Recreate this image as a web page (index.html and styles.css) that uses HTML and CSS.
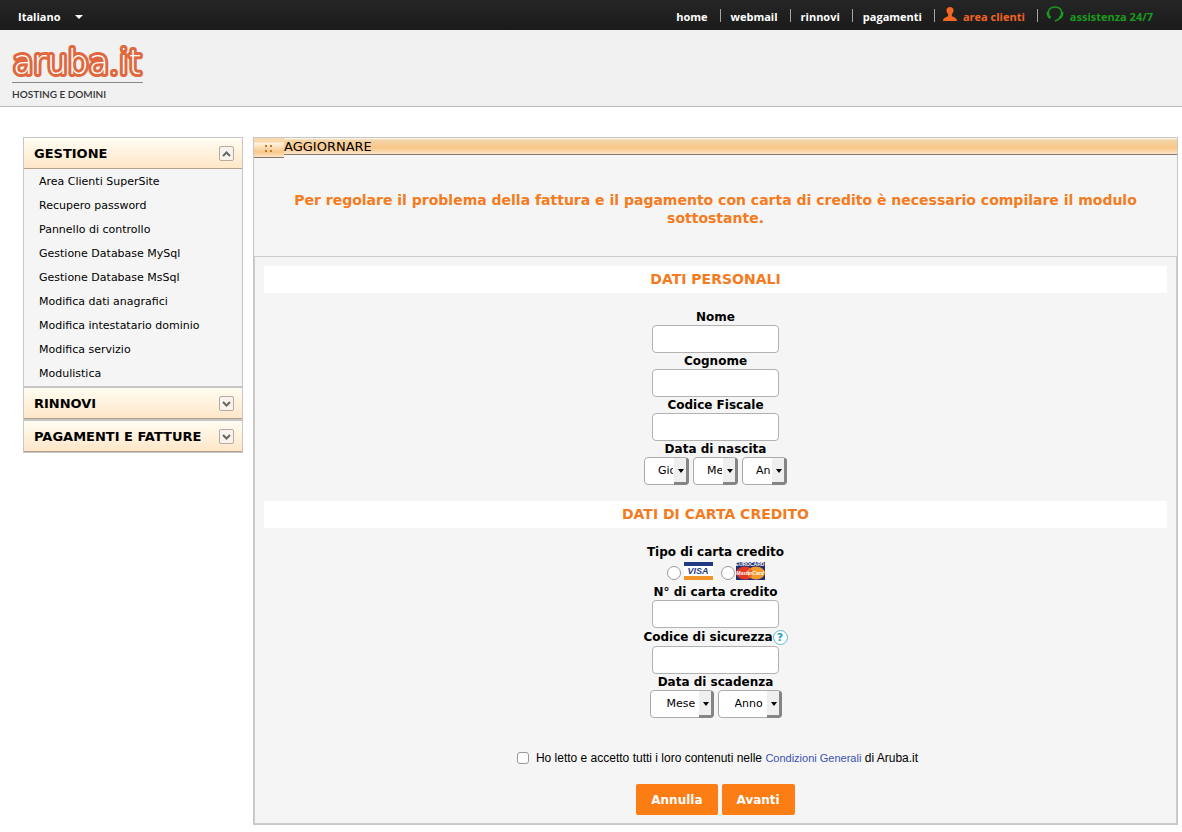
FILE: index.html
```html
<!DOCTYPE html>
<html lang="it">
<head>
<meta charset="utf-8">
<title>Aruba.it - Hosting e domini</title>
<link rel="stylesheet" href="styles.css">
</head>
<body>
<div class="topbar">
  <button class="language" type="button">Italiano <span class="caret"></span></button>
  <nav class="topnav">
    <a href="#">home</a>
    <a href="#">webmail</a>
    <a href="#">rinnovi</a>
    <a href="#">pagamenti</a>
    <a href="#" class="clients"><svg width="14" height="14" viewBox="0 0 14 14"><path fill="#f26522" d="M7 0C4.600 0 3.400 1.500 3.500 3.400C3.600 5.200 4.300 6.300 5.200 7.200L5 9C4 10.300 0 10.300 0 14H14C14 10.300 10 10.300 9 9L8.800 7.200C9.700 6.300 10.400 5.200 10.500 3.400C10.600 1.500 9.400 0 7 0Z"/></svg>area clienti</a>
    <a href="#" class="support"><svg width="18" height="16" viewBox="0 0 18 16"><path fill="none" stroke="#1a9a1e" stroke-width="1.500" d="M2.500 8C1.500 4 4.500 1 9 1S16.500 4 15.500 8M14.500 11C13 13.500 11.500 14.500 9 15"/><path fill="none" stroke="#1a9a1e" stroke-width="2.500" d="M1.800 6C1.500 9 2.500 10.500 4.500 12M16.200 6C16.500 9 15.500 10.500 13.800 12"/></svg>assistenza 24/7</a>
  </nav>
</div>
<header class="header">
  <a href="#" class="brand">
    <svg class="logo" width="131" height="42" viewBox="0 0 131 42" role="img" aria-label="aruba.it"><text class="logo-text" x="1" y="34">aruba.it</text></svg>
    <span class="tagline">HOSTING E DOMINI</span>
  </a>
</header>
<div class="page">
  <aside class="sidebar">
    <button class="section-head" type="button">GESTIONE <span class="toggle"><svg width="9" height="6" viewBox="0 0 9 6"><path d="M1 5L4.500 1.500L8 5"/></svg></span></button>
    <ul class="menu">
      <li><a href="#">Area Clienti SuperSite</a></li>
      <li><a href="#">Recupero password</a></li>
      <li><a href="#">Pannello di controllo</a></li>
      <li><a href="#">Gestione Database MySql</a></li>
      <li><a href="#">Gestione Database MsSql</a></li>
      <li><a href="#">Modifica dati anagrafici</a></li>
      <li><a href="#">Modifica intestatario dominio</a></li>
      <li><a href="#">Modifica servizio</a></li>
      <li><a href="#">Modulistica</a></li>
    </ul>
    <button class="section-head closed" type="button">RINNOVI <span class="toggle"><svg width="9" height="6" viewBox="0 0 9 6"><path d="M1 1L4.500 4.500L8 1"/></svg></span></button>
    <button class="section-head closed" type="button">PAGAMENTI E FATTURE <span class="toggle"><svg width="9" height="6" viewBox="0 0 9 6"><path d="M1 1L4.500 4.500L8 1"/></svg></span></button>
  </aside>
  <main class="panel">
    <div class="titlebar">
      <span class="grip"><svg width="8" height="8" viewBox="0 0 8 8"><path fill="#c07a28" d="M0 0h2v2H0zM5 0h2v2H5zM0 5h2v2H0zM5 5h2v2H5z"/></svg></span>
      <h1 class="title">AGGIORNARE</h1>
    </div>
    <p class="intro">Per regolare il problema della fattura e il pagamento con carta di credito è necessario compilare il modulo sottostante.</p>
    <form class="form">
      <h2 class="band">DATI PERSONALI</h2>
      <div class="fields">
        <label class="label" for="nome">Nome</label>
        <input class="text" id="nome" type="text">
        <label class="label" for="cognome">Cognome</label>
        <input class="text" id="cognome" type="text">
        <label class="label" for="fiscale">Codice Fiscale</label>
        <input class="text" id="fiscale" type="text">
        <label class="label" for="giorno">Data di nascita</label>
        <div class="selects">
          <span class="select short"><select id="giorno"><option>Giorno</option></select></span>
          <span class="select short"><select aria-label="Mese di nascita"><option>Mese</option></select></span>
          <span class="select short"><select aria-label="Anno di nascita"><option>Anno</option></select></span>
        </div>
      </div>
      <h2 class="band">DATI DI CARTA CREDITO</h2>
      <div class="fields">
        <span class="label">Tipo di carta credito</span>
        <div class="cards">
          <label class="card"><input class="radio" type="radio" name="card" value="visa"><svg width="29" height="18" viewBox="0 0 29 18" role="img" aria-label="VISA"><path fill="#fff" d="M0 0h29v18H0z"/><path fill="#1f3a82" d="M0 0h29v4H0z"/><path fill="#f2962c" d="M0 14h29v4H0z"/><text class="visa" x="14" y="12">VISA</text></svg></label>
          <label class="card"><input class="radio" type="radio" name="card" value="mastercard"><svg width="29" height="18" viewBox="0 0 29 18" role="img" aria-label="MasterCard"><path fill="#22306f" d="M0 0h29v18H0z"/><ellipse cx="9" cy="11" rx="9" ry="6.500" fill="#e23a24"/><ellipse cx="20" cy="11" rx="9" ry="6.500" fill="#f29a2e"/><path fill="#e8622a" d="M14.500 6Q11 11 14.500 16Q18 11 14.500 6Z"/><text class="euro" x="14" y="4">EUROCARD</text><text class="master" x="14" y="13">MasterCard</text></svg></label>
        </div>
        <label class="label" for="numero">N° di carta credito</label>
        <input class="text" id="numero" type="text">
        <div class="label security"><label for="codice">Codice di sicurezza</label><button class="help" type="button">?</button></div>
        <input class="text" id="codice" type="text">
        <label class="label" for="scadenza">Data di scadenza</label>
        <div class="selects">
          <span class="select long"><select id="scadenza"><option>Mese</option></select></span>
          <span class="select long"><select aria-label="Anno di scadenza"><option>Anno</option></select></span>
        </div>
      </div>
      <div class="terms">
        <input class="check" id="accetto" type="checkbox">
        <label for="accetto">Ho letto e accetto tutti i loro contenuti nelle <a href="#">Condizioni Generali</a> di Aruba.it</label>
      </div>
      <div class="actions">
        <button class="button" type="reset">Annulla</button>
        <button class="button" type="submit">Avanti</button>
      </div>
    </form>
  </main>
</div>
</body>
</html>
```
FILE: styles.css
```css
*, ::before, ::after { box-sizing: border-box; }
body {
  margin: 0;
  background: #fff;
  color: #000;
  font: 11px/16px Verdana, "DejaVu Sans", sans-serif;
}
button { border: 0; margin: 0; padding: 0; background: none; color: inherit; font: inherit; cursor: pointer; }
a { color: inherit; text-decoration: none; }

.topbar {
  display: flex;
  justify-content: space-between;
  height: 30px;
  padding: 0 29px 0 18px;
  background: linear-gradient(#252525, #1b1b1b);
  color: #fff;
  font: bold 11px/16px "Open Sans", sans-serif;
}
.language { display: flex; align-items: center; gap: 15px; padding-top: 4px; }
.caret { border: 4px solid transparent; border-top-color: #fff; border-bottom: 0; }
.topnav { display: flex; align-items: center; padding-top: 3px; }
.topnav a { display: flex; align-items: center; }
.topnav a + a::before { content: ""; width: 1px; height: 13px; margin: 0 10px 2px 12px; background: #a5a5a5; }
.topnav svg { margin: 0 6px 5px 0; }
.topnav .clients { color: #f26522; }
.topnav .support { color: #1a9a1e; }
.topnav .clients::before, .topnav .support::before { margin-right: 8px; }

.header { padding: 10px 12px 4px; background: #f1f1f1; border-bottom: 1px solid #bbb; }
.brand { display: inline-flex; flex-direction: column; }
.logo { overflow: visible; }
.logo-text {
  font: 200 33px "DejaVu Sans", sans-serif;
  fill: #fff;
  stroke: #e0683f;
  stroke-width: 6px;
  stroke-linejoin: round;
  paint-order: stroke;
}
.tagline { padding-top: 3px; border-top: 1px solid #888; color: #333; font: 10px/16px Lato, sans-serif; font-weight: 600; }

.page { display: flex; align-items: flex-start; gap: 10px; padding: 30px 4px 7px 23px; }
.sidebar { flex: 0 0 220px; border: 1px solid #c6c6c6; background: #f5f5f5; }
.section-head {
  display: flex;
  justify-content: space-between;
  align-items: center;
  width: 100%;
  height: 31px;
  padding: 1px 8px 0 10px;
  border-bottom: 1px solid #b3a08c;
  background: linear-gradient(#fffdf2, #ffe6c8);
  font-size: 13px;
  font-weight: bold;
}
.section-head.closed { height: 33px; border-top: 2px solid #c6c6c6; }
.toggle {
  display: flex;
  align-items: center;
  justify-content: center;
  width: 15px;
  height: 15px;
  border: 1px solid #b5aba0;
  border-radius: 2px;
  background: #f8f3ec;
}
.toggle path { fill: none; stroke: #666; stroke-width: 2; }
.menu { margin: 0; padding: 1px 0 0; list-style: none; }
.menu a { display: block; padding-left: 15px; line-height: 24px; }

.panel { flex: 1; border: 1px solid #c6c6c6; background: #f5f5f5; }
.titlebar { display: flex; align-items: flex-start; height: 17px; border-bottom: 1px solid #85776a; background: linear-gradient(#fff 0, #f3d5a7 2px, #f8c688 10px, #fde6cb); }
.grip {
  display: flex;
  align-items: center;
  justify-content: center;
  width: 30px;
  height: 20px;
  padding-top: 3px;
  border-bottom: 1px solid #85776a;
  background: linear-gradient(#f9d9ab 4px, #fff3e2 5px, #f8c688 14px, #fde6cb);
}
.title { margin: 0; font-size: 13px; line-height: 18px; font-weight: normal; }
.intro { margin: 0; padding: 36px 36px 29px; color: #f47b20; font-size: 14px; line-height: 18px; font-weight: bold; text-align: center; }
.form { padding: 9px 9px 8px; border: 1px solid #ccc; }
.band { margin: 0; background: #fff; color: #f47b20; font-size: 14px; line-height: 27px; text-align: center; }
.fields { display: flex; flex-direction: column; align-items: center; padding: 16px 0; }
.label { font-size: 12px; line-height: 16px; font-weight: bold; }
.text { width: 127px; height: 28px; padding: 0 8px; border: 1px solid #b2b2b2; border-radius: 4px; background: #fff; font: inherit; }
.selects { display: flex; gap: 4px; }
.select { position: relative; height: 28px; }
.select select {
  width: 100%;
  height: 28px;
  padding: 0 15px 0 13px;
  border: 1px solid #aaa;
  border-radius: 4px;
  appearance: none;
  background: #fff;
  color: #000;
  font: inherit;
}
.short { width: 45px; }
.long { width: 64px; }
.long select { padding-left: 16px; }
.select::before {
  content: "";
  position: absolute;
  right: 0;
  top: 1px;
  width: 15px;
  height: 27px;
  border: solid #858585;
  border-width: 0 3px 3px 0;
  border-radius: 0 3px 4px 0;
  background: #efefef;
  pointer-events: none;
}
.select::after {
  content: "";
  position: absolute;
  right: 5px;
  top: 12px;
  border: 3px solid transparent;
  border-top: 4px solid #000;
  border-bottom: 0;
  pointer-events: none;
}
.cards { display: flex; gap: 8px; height: 24px; padding-top: 2px; }
.card { display: flex; align-items: flex-start; }
.radio { width: 14px; height: 14px; margin: 4px 3px 0 0; appearance: none; border: 1px solid #999; border-radius: 50%; background: #fff; }
.card + .card .radio { margin-right: 1px; }
.radio:checked { border: 4px solid #f47b20; }
.card text { text-anchor: middle; font-family: "Liberation Sans", sans-serif; font-weight: bold; }
.visa { fill: #1f3a82; font-size: 9px; font-style: italic; }
.card .euro { fill: #fff; font-size: 5px; }
.card .master { fill: #fff; font-size: 5px; font-style: italic; }
.security { display: flex; align-items: center; line-height: 18px; }
.help { width: 15px; height: 15px; border: 1px solid #5bbccd; border-radius: 50%; background: #fff; color: #22a5bd; font: bold 11px/13px "DejaVu Sans", sans-serif; }
.terms { display: flex; align-items: center; justify-content: center; gap: 7px; padding: 16px 0 0 4px; font: 12px/16px "Liberation Sans", sans-serif; }
.terms a { color: #3a52b0; font-size: 11px; }
.check { width: 12px; height: 12px; margin: 0; appearance: none; border: 1px solid #999; border-radius: 3px; background: #fff; }
.check:checked { background: #f47b20; }
.actions { display: flex; justify-content: center; gap: 4px; padding-top: 18px; }
.button { height: 31px; padding: 0 15px; border-radius: 2px; background: #fb7d14; color: #fff; font-size: 12px; font-weight: bold; }
```
